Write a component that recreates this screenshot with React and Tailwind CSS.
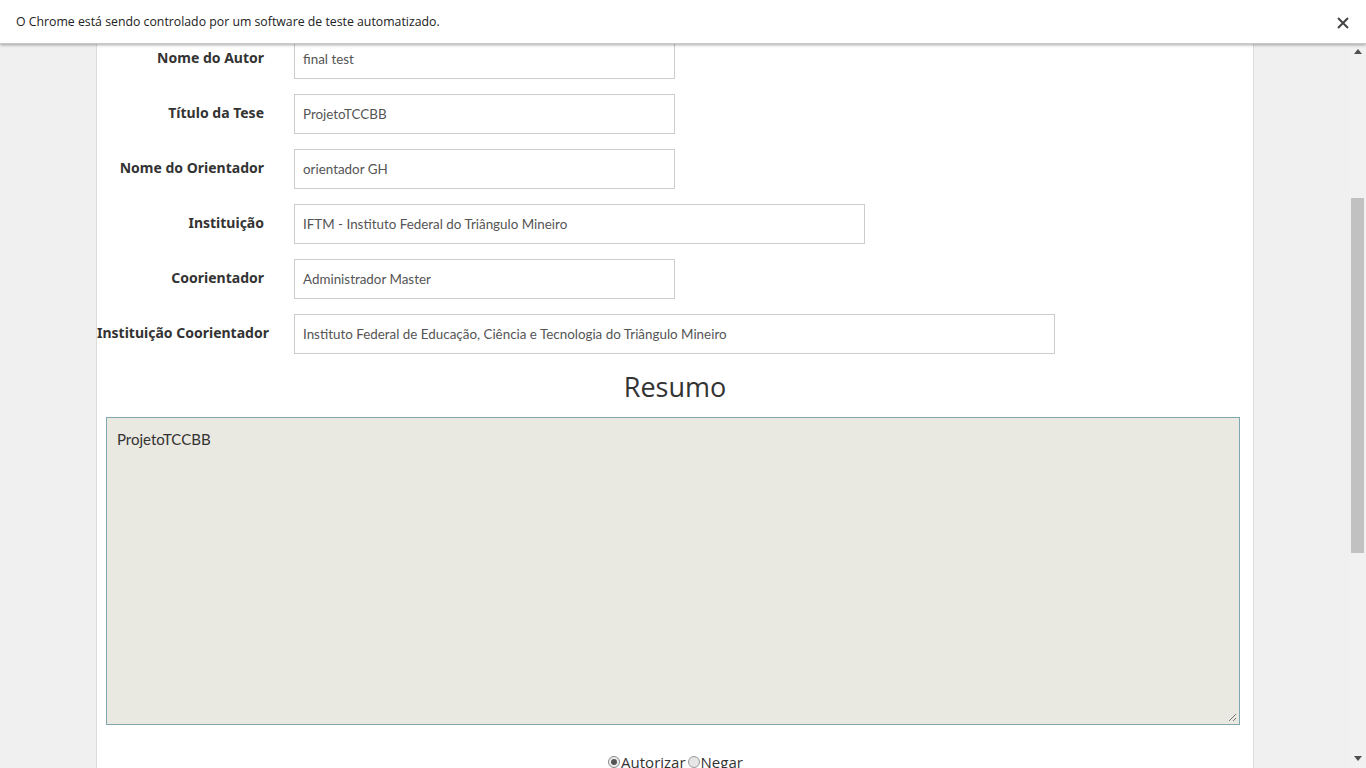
import React from "react";

const rows = [
  { label: "Nome do Autor", value: "final test", w: "w-[381px]" },
  { label: "Título da Tese", value: "ProjetoTCCBB", w: "w-[381px]" },
  { label: "Nome do Orientador", value: "orientador GH", w: "w-[381px]" },
  { label: "Instituição", value: "IFTM - Instituto Federal do Triângulo Mineiro", w: "w-[571px]" },
  { label: "Coorientador", value: "Administrador Master", w: "w-[381px]" },
  { label: "Instituição Coorientador", value: "Instituto Federal de Educação, Ciência e Tecnologia do Triângulo Mineiro", w: "w-[761px]" },
];

export default function App() {
  return (
    <div className="w-[1366px] h-[768px] overflow-hidden bg-[#f0f0f0] flex flex-col relative">
      <div className="h-[44px] bg-white flex items-center justify-between pl-[16px] pr-[17px] pt-[2px] shadow-[0_1px_3px_rgba(0,0,0,0.35)] z-10 shrink-0 border-b border-[#c8c8c8]">
        <span className="text-[12.3px] text-[#222] font-['Open_Sans',sans-serif]">
          O Chrome está sendo controlado por um software de teste automatizado.
        </span>
        <svg width="12" height="12" viewBox="0 0 12 12">
          <path d="M1 1 L11 11 M11 1 L1 11" stroke="#444" strokeWidth="2" />
        </svg>
      </div>
      <div className="flex flex-1 min-h-0">
        <div className="w-[1350px] flex min-h-0 overflow-hidden">
          <div className="ml-[96px] w-[1158px] bg-white border-l border-r border-[#dcdcdc] flex flex-col min-h-0 overflow-hidden">
            <div className="mt-[-5px] flex flex-col gap-[15px]">
              {rows.map((r) => (
                <div key={r.label} className="flex items-center h-[40px]">
                  <div className="w-[167px] text-right text-[14px] font-bold text-[#333] font-['Noto_Sans',sans-serif] pb-[3px] whitespace-nowrap">
                    {r.label}
                  </div>
                  <div className={`ml-[30px] h-[40px] ${r.w} border border-[#cccccc] flex items-center px-[8px] text-[13.4px] text-[#555] font-['Lato',sans-serif] whitespace-nowrap`}>
                    {r.value}
                  </div>
                </div>
              ))}
            </div>
            <h2 className="text-center text-[27px] leading-[40px] mt-[13px] text-[#333] font-['Open_Sans',sans-serif]">
              Resumo
            </h2>
            <div className="ml-[9px] mt-[10px] w-[1134px] h-[308px] shrink-0 bg-[#e9e8e1] border border-[#7fa7b0] relative px-[10px] pt-[10px] text-[15px] text-[#333] font-['Lato',sans-serif]">
              ProjetoTCCBB
              <svg className="absolute right-[2px] bottom-[2px]" width="9" height="9" viewBox="0 0 9 9">
                <path d="M8 1 L1 8 M8 5 L5 8" stroke="#777" strokeWidth="1" />
              </svg>
            </div>
            <div className="mt-[26px] flex items-center justify-center text-[15px] text-[#333] font-['Open_Sans',sans-serif] ml-[1px]">
              <span className="w-[12px] h-[12px] rounded-full border border-[#888] bg-[#eee] flex items-center justify-center mr-[1px]">
                <span className="w-[6px] h-[6px] rounded-full bg-[#555]"></span>
              </span>
              <span>Autorizar</span>
              <span className="w-[12px] h-[12px] rounded-full border border-[#999] bg-[#e6e6e6] ml-[2px] mr-[1px]"></span>
              <span>Negar</span>
            </div>
          </div>
        </div>
        <div className="w-[16px] bg-[#f1f1f1] flex flex-col items-center relative">
          <svg className="mt-[5px]" width="8" height="5" viewBox="0 0 8 5">
            <path d="M0 5 L4 0 L8 5 Z" fill="#505050" />
          </svg>
          <div className="absolute left-[1px] top-[154px] w-[13px] h-[355px] bg-[#c1c1c1]"></div>
          <svg className="mt-auto mb-[7px]" width="8" height="5" viewBox="0 0 8 5">
            <path d="M0 0 L8 0 L4 5 Z" fill="#505050" />
          </svg>
        </div>
      </div>
    </div>
  );
}
